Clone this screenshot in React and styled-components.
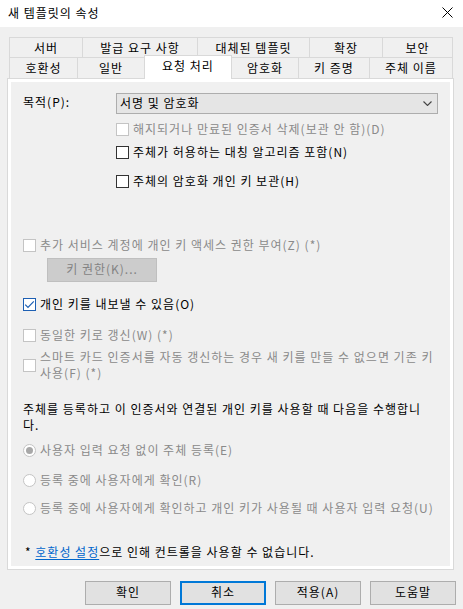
import React from "react";
import styled, { createGlobalStyle } from "styled-components";

const GlobalStyle = createGlobalStyle`
  html, body {
    margin: 0;
    padding: 0;
    background: #f0f0f0;
  }
  body {
    font-family: "Noto Sans CJK KR", "Noto Sans", sans-serif;
    font-size: 12px;
    letter-spacing: 1px;
    color: #000;
  }
`;

const Window = styled.div`
  width: 463px;
  height: 609px;
  background: #f0f0f0;
  display: flex;
  flex-direction: column;
  overflow: hidden;
`;

const TitleBar = styled.div`
  height: 27px;
  background: #fff;
  display: flex;
  align-items: center;
  justify-content: space-between;
  padding: 0 10px 2px 8px;
  box-sizing: border-box;
  line-height: 16px;
`;

const Body = styled.div`
  padding-left: 7px;
  padding-top: 10px;
`;

const TabStrip = styled.div`
  margin-left: 2px;
  display: flex;
  flex-direction: column;
`;

const TabRow = styled.div`
  display: flex;
  align-items: flex-end;
  height: ${(p) => p.$h}px;
`;

const Tab = styled.div`
  box-sizing: border-box;
  width: ${(p) => p.$w}px;
  height: ${(p) => (p.$active ? 24 : p.$h)}px;
  margin-left: ${(p) => (p.$first ? 0 : -1)}px;
  margin-bottom: ${(p) => (p.$active ? -1 : 0)}px;
  border: 1px solid #d9d9d9;
  border-bottom: none;
  background: ${(p) => (p.$active ? "#fff" : "#f0f0f0")};
  position: ${(p) => (p.$active ? "relative" : "static")};
  z-index: ${(p) => (p.$active ? 1 : 0)};
  display: flex;
  align-items: center;
  justify-content: center;
  padding-bottom: ${(p) => (p.$active ? 3 : 0)}px;
  line-height: 16px;
  white-space: nowrap;
`;

const Panel = styled.div`
  box-sizing: border-box;
  width: 447px;
  height: 492px;
  border: 1px solid #d9d9d9;
  background: #fff;
  padding: 3px;
`;

const Page = styled.div`
  box-sizing: border-box;
  height: 100%;
  background: #f0f0f0;
  padding: 11px 12px 0 12px;
  display: flex;
  flex-direction: column;
  line-height: 16px;
`;

const PurposeRow = styled.div`
  display: flex;
  align-items: center;
  height: 21px;
`;

const FieldLabel = styled.div`
  width: 93px;
  padding-bottom: 3px;
`;

const Select = styled.div`
  box-sizing: border-box;
  width: 322px;
  height: 21px;
  background: #e5e5e5;
  border: 1px solid #adadad;
  display: flex;
  align-items: center;
  justify-content: space-between;
  padding: 0 5px 1px 3px;
`;

const Row = styled.div`
  display: flex;
  align-items: center;
  gap: 4px;
  margin-top: ${(p) => p.$mt || 0}px;
  margin-left: ${(p) => p.$indent || 0}px;
  color: ${(p) => (p.$disabled ? "#8a8a8a" : "#000")};
`;

const Box = styled.span`
  box-sizing: border-box;
  flex: 0 0 13px;
  width: 13px;
  height: 13px;
  background: #fff;
  border: 1px solid
    ${(p) => (p.$disabled ? "#c4c4c4" : p.$checked ? "#1d5fb3" : "#333")};
  display: flex;
  align-items: center;
  justify-content: center;
`;

const Circle = styled.span`
  box-sizing: border-box;
  flex: 0 0 13px;
  width: 13px;
  height: 13px;
  border-radius: 50%;
  background: #fff;
  border: 1px solid #c4c4c4;
  display: flex;
  align-items: center;
  justify-content: center;
  &::after {
    content: "";
    display: ${(p) => (p.$selected ? "block" : "none")};
    width: 7px;
    height: 7px;
    border-radius: 50%;
    background: #a8a8a8;
  }
`;

const Caption = styled.span`
  white-space: nowrap;
`;

const KeyButton = styled.div`
  box-sizing: border-box;
  width: 110px;
  height: 24px;
  margin-top: 5px;
  margin-left: 24px;
  background: #cccccc;
  border: 1px solid #bfbfbf;
  color: #838383;
  display: flex;
  align-items: center;
  justify-content: center;
  padding-bottom: 2px;
`;

const Paragraph = styled.div`
  margin-top: 20px;
`;

const Footnote = styled.div`
  margin-top: 28px;
  margin-left: 2px;
`;

const Link = styled.span`
  color: #0066cc;
  text-decoration: underline;
  text-underline-offset: 2px;
`;

const ButtonBar = styled.div`
  display: flex;
  justify-content: flex-end;
  gap: 9px;
  padding-right: 7px;
  margin-top: 11px;
`;

const Button = styled.div`
  box-sizing: border-box;
  width: 86px;
  height: 24px;
  background: #e1e1e1;
  border: ${(p) => (p.$focused ? "2px solid #0078d7" : "1px solid #adadad")};
  display: flex;
  align-items: center;
  justify-content: center;
  padding-bottom: 2px;
  line-height: 16px;
`;

const topTabs = [
  { label: "서버", w: 74 },
  { label: "발급 요구 사항", w: 116 },
  { label: "대체된 템플릿", w: 113 },
  { label: "확장", w: 74 },
  { label: "보안", w: 71 },
];

const bottomTabs = [
  { label: "호환성", w: 69 },
  { label: "일반", w: 68 },
  { label: "요청 처리", w: 88, active: true },
  { label: "암호화", w: 68 },
  { label: "키 증명", w: 72 },
  { label: "주체 이름", w: 84 },
];

function CloseIcon() {
  return (
    <svg width="11" height="11" viewBox="0 0 11 11">
      <path d="M0.5 0.5 L10.5 10.5 M10.5 0.5 L0.5 10.5" stroke="#000" strokeWidth="1" />
    </svg>
  );
}

function Chevron() {
  return (
    <svg width="9" height="5" viewBox="0 0 9 5">
      <path d="M0.5 0.5 L4.5 4.5 L8.5 0.5" stroke="#444" strokeWidth="1.1" fill="none" />
    </svg>
  );
}

function Check({ label, checked, disabled, mt, indent }) {
  return (
    <Row $mt={mt} $indent={indent} $disabled={disabled}>
      <Box $checked={checked} $disabled={disabled}>
        {checked && (
          <svg width="11" height="11" viewBox="0 0 11 11">
            <path d="M1.2 5.6 L4 8.4 L9.8 2.4" stroke="#1d5fb3" strokeWidth="1.2" fill="none" />
          </svg>
        )}
      </Box>
      <Caption>{label}</Caption>
    </Row>
  );
}

function Radio({ label, selected, mt }) {
  return (
    <Row $mt={mt} $disabled>
      <Circle $selected={selected} />
      <Caption>{label}</Caption>
    </Row>
  );
}

export default function App() {
  return (
    <>
      <GlobalStyle />
      <Window>
        <TitleBar>
          <span>새 템플릿의 속성</span>
          <CloseIcon />
        </TitleBar>
        <Body>
          <TabStrip>
            <TabRow $h={20}>
              {topTabs.map((t, i) => (
                <Tab key={t.label} $w={t.w} $h={20} $first={i === 0}>
                  {t.label}
                </Tab>
              ))}
            </TabRow>
            <TabRow $h={21}>
              {bottomTabs.map((t, i) => (
                <Tab key={t.label} $w={t.w} $h={21} $first={i === 0} $active={t.active}>
                  {t.label}
                </Tab>
              ))}
            </TabRow>
          </TabStrip>
          <Panel>
            <Page>
              <PurposeRow>
                <FieldLabel>목적(P):</FieldLabel>
                <Select>
                  <span>서명 및 암호화</span>
                  <Chevron />
                </Select>
              </PurposeRow>
              <Check indent={93} mt={7} disabled label="해지되거나 만료된 인증서 삭제(보관 안 함)(D)" />
              <Check indent={93} mt={7} label="주체가 허용하는 대칭 알고리즘 포함(N)" />
              <Check indent={93} mt={13} label="주체의 암호화 개인 키 보관(H)" />

              <Check mt={48} disabled label="추가 서비스 계정에 개인 키 액세스 권한 부여(Z) (*)" />
              <KeyButton>키 권한(K)...</KeyButton>
              <Check mt={14} checked label="개인 키를 내보낼 수 있음(O)" />
              <Check mt={15} disabled label="동일한 키로 갱신(W) (*)" />
              <Check
                mt={6}
                disabled
                label={
                  <>
                    스마트 카드 인증서를 자동 갱신하는 경우 새 키를 만들 수 없으면 기존 키
                    <br />
                    사용(F) (*)
                  </>
                }
              />

              <Paragraph>
                주체를 등록하고 이 인증서와 연결된 개인 키를 사용할 때 다음을 수행합니
                <br />
                다.
              </Paragraph>
              <Radio mt={9} selected label="사용자 입력 요청 없이 주체 등록(E)" />
              <Radio mt={14} label="등록 중에 사용자에게 확인(R)" />
              <Radio mt={12} label="등록 중에 사용자에게 확인하고 개인 키가 사용될 때 사용자 입력 요청(U)" />

              <Footnote>
                * <Link>호환성 설정</Link>으로 인해 컨트롤을 사용할 수 없습니다.
              </Footnote>
            </Page>
          </Panel>
        </Body>
        <ButtonBar>
          <Button>확인</Button>
          <Button $focused>취소</Button>
          <Button>적용(A)</Button>
          <Button>도움말</Button>
        </ButtonBar>
      </Window>
    </>
  );
}
